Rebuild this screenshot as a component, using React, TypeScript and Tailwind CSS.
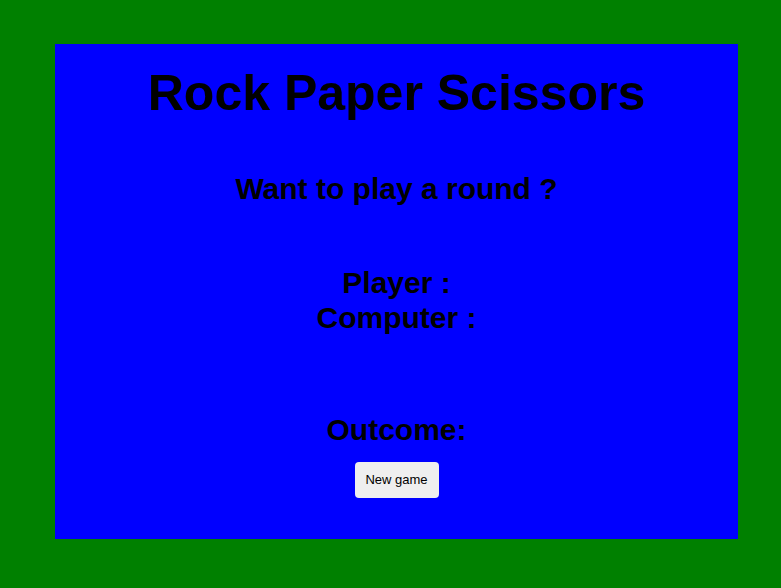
export default function App() {
  return (
    <div className="min-h-screen w-full bg-[#008000] pt-[44px] pb-[49px] px-[55px] font-['Liberation_Sans',Arial,sans-serif] text-black">
      <div className="h-[495px] w-[683px] bg-[#0000ff] flex flex-col items-center">
        <h1 className="mt-[21px] text-[50px] font-bold leading-[57.5px]">Rock Paper Scissors</h1>

        <h2 className="mt-[49px] text-[30px] font-bold leading-[34.5px]">Want to play a round ?</h2>

        <div className="mt-[60px] flex flex-col items-center text-[30px] font-bold leading-[34.5px]">
          <p>Player :</p>
          <p>Computer :</p>
        </div>

        <h2 className="mt-[78px] text-[30px] font-bold leading-[34.5px]">Outcome:</h2>

        <button className="mt-[14px] h-[36px] w-[84px] rounded-[4px] bg-[#efefef] text-[13px] leading-[15px] text-black">
          New game
        </button>
      </div>
    </div>
  )
}
